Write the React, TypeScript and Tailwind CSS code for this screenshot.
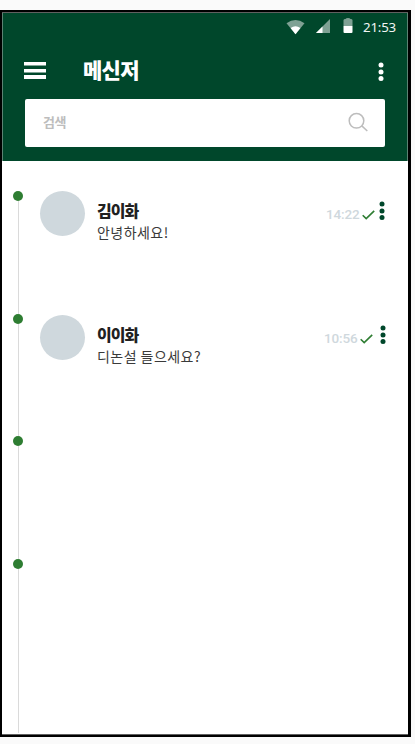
import React from 'react';

const korean = "font-['Noto_Sans_CJK_KR',sans-serif]";

function Dots({ className }: { className: string }) {
  return (
    <svg viewBox="0 0 6 20" className={className} fill="currentColor">
      <circle cx="3" cy="3" r="2.5" />
      <circle cx="3" cy="10.1" r="2.5" />
      <circle cx="3" cy="16.4" r="2.5" />
    </svg>
  );
}

function StatusBar() {
  return (
    <div className="flex h-[30px] pl-[283px]">
      <svg viewBox="0 0 19 16" className="mt-[6px] h-4 w-[19px] shrink-0">
        <path d="M.5 4.2Q9.5-2.4 18.5 4.2L9.5 15.2Z" fill="#7fa194" />
        <path d="M4.6 9Q9.5 5.6 14.4 9L9.5 15.2Z" fill="#fff" />
      </svg>
      <svg viewBox="0 0 14 14" className="ml-[11px] mt-[6px] h-3.5 w-3.5 shrink-0">
        <path d="M0 14L14 0V14Z" fill="#7fa194" />
        <path d="M0 14L6.5 7.5V14Z" fill="#fff" />
      </svg>
      <svg viewBox="0 0 10 15" className="ml-[13px] mt-[5px] h-[15px] w-2.5 shrink-0">
        <path d="M.5 2.2Q.5 1 2.5 1Q3 0 5 0Q7 0 7.5 1Q9.5 1 9.5 2.2V8H.5Z" fill="#7fa194" />
        <path d="M.5 8H9.5V14Q9.5 15 8.5 15H1.5Q.5 15 .5 14Z" fill="#fff" />
      </svg>
      <span className="ml-[10px] mt-[4px] font-['Noto_Sans',sans-serif] text-[13.3px] leading-[20px] tracking-[-0.2px] text-[#f1f5f3]">
        21:53
      </span>
    </div>
  );
}

function Header() {
  return (
    <header className="h-[148px] border-x border-[#5c8273] bg-[#00472b] text-white">
      <StatusBar />
      <div className="flex h-14 pl-[21px]">
        <svg viewBox="0 0 22 18" className="mt-[19px] h-[18px] w-[22px] shrink-0" fill="#fff">
          <rect width="22" height="3.5" />
          <rect y="7" width="22" height="3.5" />
          <rect y="13" width="22" height="4" />
        </svg>
        <h1 className={`${korean} ml-[37px] mt-[10px] h-8 w-[60px] whitespace-nowrap text-[21px] font-black leading-8 tracking-[-0.7px]`}>
          메신저
        </h1>
        <Dots className="ml-[235px] mt-[18.5px] h-5 w-1.5 shrink-0" />
      </div>
      <div className="ml-[22px] flex h-12 w-[360px] items-center rounded-[2px] bg-white pl-[18px] pr-[17px]">
        <span className={`${korean} flex-1 pb-[2px] text-[13px] font-bold leading-5 tracking-[-0.4px] text-[#bdbdbd]`}>검색</span>
        <svg viewBox="0 0 20 20" className="mb-[2px] h-5 w-5" fill="none" stroke="#bdbdbd" strokeWidth="1.5">
          <circle cx="8.5" cy="8.8" r="7.3" />
          <path d="M13.8 13.9L19.3 19" />
        </svg>
      </div>
    </header>
  );
}

type Chat = { name: string; message: string; time: string };

const chats: (Chat | null)[] = [
  { name: '김이화', message: '안녕하세요!', time: '14:22' },
  { name: '이이화', message: '디논설 들으세요?', time: '10:56' },
  null,
  null,
];

function Row({ chat, index }: { chat: Chat | null; index: number }) {
  return (
    <li className={`flex ${index === 3 ? 'h-[174px]' : index === 1 ? 'h-[122px]' : 'h-[123px]'}`}>
      <div className="ml-[11.4px] flex w-2.5 shrink-0 flex-col items-center">
        <span className="h-2.5 w-2.5 shrink-0 rounded-full bg-[#2e7d32]" />
        <span className="w-px flex-1 bg-[#dadada]" />
      </div>
      {chat && (
        <>
          <span className={`ml-[17px] h-[45px] w-[45px] shrink-0 rounded-full bg-[#cfd8dd] ${index ? 'mt-px' : ''}`} />
          <div className={`${korean} ml-[11.6px] w-[130px] shrink-0 whitespace-nowrap ${index ? 'mt-[9px]' : 'mt-2'}`}>
            <p className="text-[16px] font-extrabold leading-[22px] tracking-[-0.9px] text-[#212121]">{chat.name}</p>
            <p className="text-[14px] font-normal leading-[22px] tracking-[0.45px] text-[#3a3a3a]">{chat.message}</p>
          </div>
          <div className={`flex flex-1 justify-end ${index ? 'mt-[10px] pr-[22.5px]' : 'mt-[9.5px] pr-[23.5px]'}`}>
            <time className="mt-[3.5px] font-['Roboto',sans-serif] text-[13.5px] font-medium leading-5 tracking-[-0.15px] text-[#cfd8dd]">
              {chat.time}
            </time>
            <svg viewBox="0 0 13 10" className="ml-[2px] mt-[9.5px] h-2.5 w-[13px]" fill="none" stroke="#2e7d32" strokeWidth="1.6">
              <path d="M.7 5.2L4.2 8.6L12.2 .9" />
            </svg>
            <Dots className={`h-5 w-1.5 text-[#00472b] ${index ? 'ml-[7px] mt-[.5px]' : 'ml-[4px]'}`} />
          </div>
        </>
      )}
    </li>
  );
}

export default function App() {
  return (
    <div className="h-[744px] w-[415px] overflow-hidden bg-[#fafafa] pt-[10px]">
      <main className="flex h-[727px] w-[411px] flex-col overflow-hidden border-y-2 border-l-2 border-r-[3px] border-black bg-white">
        <div className="h-px shrink-0 bg-[#606060]" />
        <Header />
        <ul className="min-h-0 flex-1 pt-[30px]">
          {chats.map((chat, i) => (
            <Row key={i} chat={chat} index={i} />
          ))}
        </ul>
        <div className="h-px shrink-0 bg-[#606060]" />
      </main>
    </div>
  );
}
